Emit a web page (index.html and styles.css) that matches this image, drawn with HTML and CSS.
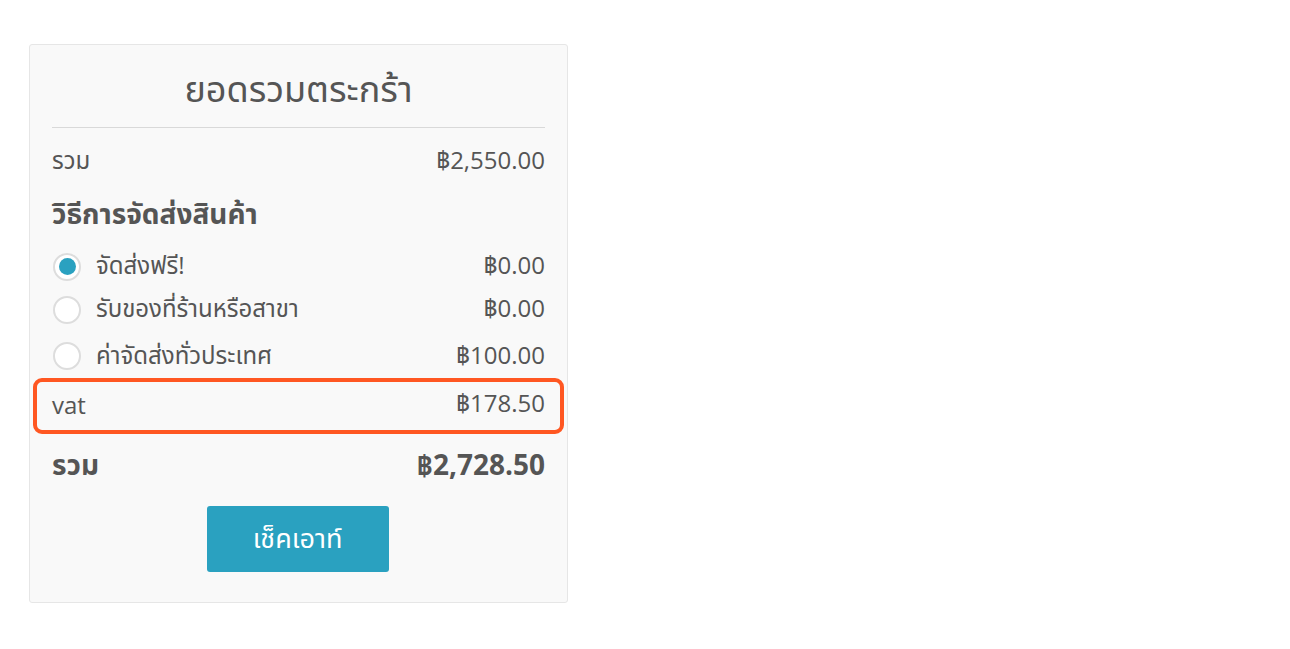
FILE: index.html
```html
<!DOCTYPE html>
<html lang="th">
<head>
<meta charset="utf-8">
<title>ยอดรวมตระกร้า</title>
<link rel="stylesheet" href="styles.css">
</head>
<body>
<div class="page">
  <section class="cart-totals">
    <h2 class="title">ยอดรวมตระกร้า</h2>
    <div class="row subtotal">
      <span>รวม</span>
      <span>฿2,550.00</span>
    </div>
    <h3 class="shipping-title">วิธีการจัดส่งสินค้า</h3>
    <ul class="shipping">
      <li class="ship-row">
        <span class="radio checked"></span>
        <span class="ship-label">จัดส่งฟรี!</span>
        <span class="ship-price">฿0.00</span>
      </li>
      <li class="ship-row">
        <span class="radio"></span>
        <span class="ship-label">รับของที่ร้านหรือสาขา</span>
        <span class="ship-price">฿0.00</span>
      </li>
      <li class="ship-row ship-row-last">
        <span class="radio"></span>
        <span class="ship-label">ค่าจัดส่งทั่วประเทศ</span>
        <span class="ship-price">฿100.00</span>
      </li>
    </ul>
    <div class="vat-box">
      <span>vat</span>
      <span>฿178.50</span>
    </div>
    <div class="row total">
      <span>รวม</span>
      <span>฿2,728.50</span>
    </div>
    <div class="actions">
      <button class="checkout">เช็คเอาท์</button>
    </div>
  </section>
</div>
</body>
</html>
```
FILE: styles.css
```css
* { box-sizing: border-box; }
html, body { margin: 0; padding: 0; background: #fff; }
body {
  font-family: "Open Sans", "Noto Sans", "Noto Sans Thai", sans-serif;
  color: #555;
}
.page {
  padding: 44px 0 0 29px;
}
.cart-totals {
  width: 539px;
  height: 559px;
  background: #f9f9f9;
  border: 1px solid #e6e6e6;
  border-radius: 3px;
  padding: 0 22px;
}
.title {
  margin: 0;
  padding-top: 18px;
  height: 83px;
  border-bottom: 1px solid #d9d9d9;
  font-size: 36px;
  font-weight: 400;
  text-align: center;
  line-height: 52px;
}
.row {
  display: flex;
  justify-content: space-between;
  align-items: center;
}
.subtotal {
  font-size: 24px;
  height: 66px;
}
.shipping-title {
  margin: 0;
  font-size: 28px;
  font-weight: 700;
  line-height: 32px;
  padding-top: 3px;
  height: 51px;
}
.shipping {
  list-style: none;
  margin: 0;
  padding: 0;
}
.ship-row {
  display: flex;
  align-items: center;
  height: 43px;
  font-size: 24px;
}
.ship-row-last { height: 46px; padding-top: 4px; }
.radio {
  width: 28px;
  height: 28px;
  border-radius: 50%;
  border: 2px solid #ddd;
  background: #fff;
  margin-left: 1px;
  margin-right: 15px;
  flex: none;
  position: relative;
}
.radio.checked::after {
  content: "";
  position: absolute;
  left: 3.5px;
  top: 3.5px;
  width: 17px;
  height: 17px;
  border-radius: 50%;
  background: #2aa1c0;
}
.ship-label { flex: 1; }
.vat-box {
  margin: 1px -19px 0 -19px;
  height: 56px;
  border: 4px solid #ff5722;
  border-radius: 9px;
  display: flex;
  justify-content: space-between;
  align-items: center;
  padding: 0 15px 3px;
  font-size: 24px;
}
.total {
  font-size: 28px;
  font-weight: 700;
  height: 64px;
}
.actions {
  display: flex;
  justify-content: center;
  padding-top: 8px;
}
.checkout {
  width: 182px;
  height: 66px;
  margin-left: -2px;
  background: #2aa1c0;
  border: none;
  border-radius: 3px;
  color: #fff;
  font-family: inherit;
  font-size: 27px;
  cursor: pointer;
}
```
